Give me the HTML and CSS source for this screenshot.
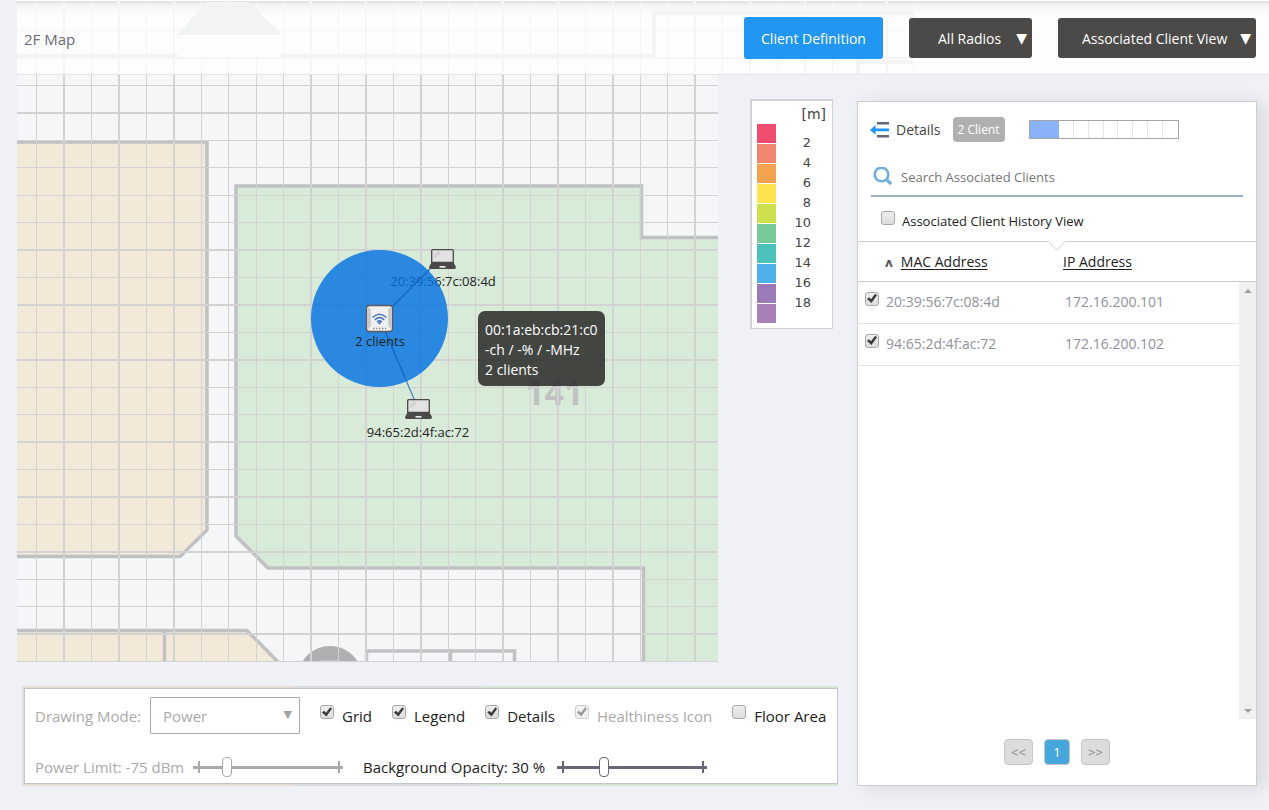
FILE: index.html
```html
<!DOCTYPE html>
<html lang="en">
<head>
<meta charset="utf-8">
<title>2F Map</title>
<link rel="stylesheet" href="styles.css">
</head>
<body>
<header class="topbar">
  <svg class="topbar-art" width="910" height="74" aria-hidden="true">
    <path class="faint-line" d="M19.500 0V74M74.500 0V74M129.500 0V74M184.500 0V74M211.500 0V74M239.500 0V74M266.500 0V74M321.500 0V74M376.500 0V74M431.500 0V74M458.500 0V74M513.500 0V74M568.500 0V74M623.500 0V74M650.500 0V74M705.500 0V74M760.500 0V74M815.500 0V74M842.500 0V74M896.500 0V74M0 30.500H896"/>
    <path class="faint-line faint-line-bold" d="M47 0V74M102 0V74M157 0V74M294 0V74M349 0V74M404 0V74M486 0V74M541 0V74M596 0V74M678 0V74M733 0V74M788 0V74M870 0V74M0 58H896"/>
    <path class="faint-wall" d="M0 56H161M262 56H637V13H895V24M841 74V62H895"/>
    <path fill="#f2f4f3" d="M189 2H232L265 35H160Z"/>
    <path fill="#fdfdfd" d="M161 36H262V57H161Z"/>
  </svg>
  <h1 class="title">2F Map</h1>
  <button class="btn-primary" type="button">Client Definition</button>
  <div class="dropdown">
    <select class="dark-select radios" aria-label="Radios"><option>All Radios</option></select>
    <span class="caret" aria-hidden="true">▼</span>
  </div>
  <div class="dropdown">
    <select class="dark-select view" aria-label="View"><option>Associated Client View</option></select>
    <span class="caret" aria-hidden="true">▼</span>
  </div>
</header>

<main class="workspace">
  <section class="stage">
    <div class="map-row">
      <svg class="map" viewBox="0 0 701 587" role="img" aria-label="Floor map">
        <rect width="701" height="587" fill="#f5f6f8"/>
        <g class="wall">
          <path fill="#f3e9d8" d="M-5 67H190V455L163 481.500H-5Z"/>
          <path fill="#d8ebd8" d="M219 111H624.500V162.500H706V592H626.500V493H251L219 461Z"/>
          <path fill="#f3e9d8" d="M-5 555.500H230L265 591H-5Z"/>
          <path fill="none" d="M147.500 555V590M349.500 590V576H497.500V590M433.500 576V590"/>
        </g>
        <path fill="#aeafb1" d="M285 587C292 576 302 571 313 571S334 576 341 587Z"/>
        <path fill="#c6c6c8" d="M303 587V585H323V587Z"/>
        <text class="room-no" x="508" y="330">141</text>
        <path class="grid" d="M19.500 0V587M74.500 0V587M129.500 0V587M184.500 0V587M211.500 0V587M239.500 0V587M266.500 0V587M321.500 0V587M376.500 0V587M431.500 0V587M458.500 0V587M513.500 0V587M568.500 0V587M623.500 0V587M650.500 0V587M0 10.500H701M0 65.500H701M0 92.500H701M0 120.500H701M0 147.500H701M0 202.500H701M0 257.500H701M0 312.500H701M0 339.500H701M0 394.500H701M0 449.500H701M0 504.500H701M0 531.500H701M0 586.500H701"/>
        <path class="grid grid-bold" d="M47 0V587M102 0V587M157 0V587M294 0V587M349 0V587M404 0V587M486 0V587M541 0V587M596 0V587M678 0V587M0 38H701M0 175H701M0 230H701M0 285H701M0 367H701M0 422H701M0 477H701M0 559H701"/>
        <defs>
          <g id="laptop">
            <path fill="#e2e2e2" stroke="#4b4948" stroke-width="1.300" d="M3.600 .7H23.400Q24.300 .7 24.300 1.600V13.500H2.700V1.600Q2.700 .7 3.600 .7Z"/>
            <path stroke="#b5b5b5" stroke-width=".8" d="M5 6.500L9.500 2.500M5 9L11.500 3.200"/>
            <path fill="#4b4948" d="M2.500 13.500H24.500L27 18Q27 20 25.500 20H1.500Q0 20 0 18Z"/>
            <path fill="#e8e8e8" d="M10.500 17H16.500V18.700H10.500Z"/>
          </g>
        </defs>
        <path class="link" d="M363 244L414 193M363 244L400 331"/>
        <text class="node-label" x="426" y="211">20:39:56:7c:08:4d</text>
        <circle class="coverage" cx="362.500" cy="243.500" r="68.500"/>
        <path class="link link-over" d="M363 244L412 195M363 244L388 303"/>
        <use href="#laptop" x="412" y="174"/>
        <use href="#laptop" x="388" y="324"/>
        <g>
          <rect x="349.500" y="230.500" width="26" height="26" rx="3" fill="#f0f0f1" stroke="#5c5a5a" stroke-width="1.300"/>
          <path fill="#c7c8ca" d="M350.300 232L353.800 234V251L350.300 255ZM374.700 232L371.200 234V251L374.700 255Z"/>
          <path fill="none" stroke="#4f7dbb" stroke-width="1.600" d="M355.500 242.500Q362.500 236 369.500 242.500M357.800 244.800Q362.500 240.500 367.200 244.800M360 247Q362.500 244.800 365 247"/>
          <circle cx="362.500" cy="248" r="1.400" fill="#4f7dbb"/>
          <path stroke="#909090" stroke-width="1.300" stroke-dasharray="1.500 1.500" d="M356 253.500H369"/>
        </g>
        <text class="node-label" x="363" y="271">2 clients</text>
        <text class="node-label" x="401" y="362">94:65:2d:4f:ac:72</text>
        <rect class="tip" x="461" y="236" width="127" height="75" rx="7"/>
        <text class="tip-text" x="468" y="260">00:1a:eb:cb:21:c0</text>
        <text class="tip-text" x="468" y="280">-ch / -% / -MHz</text>
        <text class="tip-text" x="468" y="300">2 clients</text>
      </svg>

      <aside class="legend" aria-label="Distance legend">
        <div class="legend-unit">[m]</div>
        <div class="legend-body">
          <div class="swatches">
            <i class="c1"></i><i class="c2"></i><i class="c3"></i><i class="c4"></i><i class="c5"></i><i class="c6"></i><i class="c7"></i><i class="c8"></i><i class="c9"></i><i class="c10"></i>
          </div>
          <div class="marks">
            <span>2</span><span>4</span><span>6</span><span>8</span><span>10</span><span>12</span><span>14</span><span>16</span><span>18</span>
          </div>
        </div>
      </aside>
    </div>

    <div class="toolbar-edge">
      <form class="toolbar">
        <div class="tool-row">
          <label class="muted drawing" for="mode">Drawing Mode:</label>
          <div class="dropdown mode">
            <select id="mode" class="light-select" disabled><option>Power</option></select>
            <span class="caret small" aria-hidden="true">▼</span>
          </div>
          <label class="tick"><input type="checkbox" checked>Grid</label>
          <label class="tick"><input type="checkbox" checked>Legend</label>
          <label class="tick"><input type="checkbox" checked>Details</label>
          <label class="tick muted"><input type="checkbox" checked disabled>Healthiness Icon</label>
          <label class="tick"><input type="checkbox">Floor Area</label>
        </div>
        <div class="tool-row sliders">
          <label class="muted power" for="power">Power Limit: -75 dBm</label>
          <input id="power" class="slider" type="range" min="0" max="100" value="21" disabled>
          <label class="opacity" for="opacity">Background Opacity: 30 %</label>
          <input id="opacity" class="slider" type="range" min="0" max="100" value="30">
        </div>
      </form>
    </div>
  </section>

  <section class="panel">
    <div class="panel-head">
      <svg width="20" height="16" viewBox="0 0 20 16" aria-hidden="true">
        <path fill="#636777" d="M7 0H19V2.500H7ZM7 13H19V15.500H7Z"/>
        <path fill="#1e96ff" d="M0 7.900L5.500 3V6.600H19V9.200H5.500V12.800Z"/>
      </svg>
      <h2 class="panel-title">Details</h2>
      <span class="badge">2 Client</span>
      <div class="gauge" role="img" aria-label="2 of 10">
        <i class="on"></i><i class="on"></i><i></i><i></i><i></i><i></i><i></i><i></i><i></i><i></i>
      </div>
    </div>
    <div class="search">
      <svg width="20" height="20" viewBox="0 0 20 20" fill="none" aria-hidden="true">
        <circle cx="8.500" cy="7.500" r="6.800" stroke="#74acdc" stroke-width="2.600"/>
        <path stroke="#74acdc" stroke-width="3.400" d="M13.300 12.300L18 17"/>
      </svg>
      <input type="text" placeholder="Search Associated Clients" aria-label="Search Associated Clients">
    </div>
    <label class="tick history"><input type="checkbox">Associated Client History View</label>
    <div class="list">
      <svg class="notch" width="20" height="11" viewBox="0 0 20 11" aria-hidden="true">
        <path fill="#fff" stroke="#d5d5d8" d="M1 0L10 9L19 0"/>
      </svg>
      <table class="clients">
        <thead>
          <tr>
            <th class="mac"><span class="sort">ʌ</span><a href="#">MAC Address</a></th>
            <th class="ip"><a href="#">IP Address</a></th>
          </tr>
        </thead>
        <tbody>
          <tr><td><label class="tick row-tick"><input type="checkbox" checked>20:39:56:7c:08:4d</label></td><td class="ip">172.16.200.101</td></tr>
          <tr><td><label class="tick row-tick"><input type="checkbox" checked>94:65:2d:4f:ac:72</label></td><td class="ip">172.16.200.102</td></tr>
        </tbody>
      </table>
      <div class="scrollbar" aria-hidden="true"><i class="up"></i><i class="down"></i></div>
    </div>
    <nav class="pager" aria-label="Pages">
      <button type="button">&lt;&lt;</button>
      <button type="button" class="current">1</button>
      <button type="button">&gt;&gt;</button>
    </nav>
  </section>
</main>
</body>
</html>
```

FILE: styles.css
```css
* { box-sizing: border-box; }

body {
  margin: 0;
  background: #f0f1f6;
  color: #222;
  font: 14px/20px "Open Sans", "Noto Sans", sans-serif;
}

h1, h2 { margin: 0; font-weight: 400; }
button, select, input { font-family: inherit; margin: 0; }

/* Top bar */
.topbar {
  position: relative;
  display: flex;
  align-items: center;
  gap: 26px;
  height: 75px;
  margin-left: 17px;
  padding: 2px 13px 0 0;
  background: linear-gradient(#fff 0 1px, #e4e4e4 1px 3px, #f2f2f2 4px, #fdfdfd 14px);
  border-bottom: 1px solid #e4e5e8;
}
.topbar-art { position: absolute; left: 0; top: 0; }
.faint-line { stroke: #f5f5f5; }
.faint-line-bold { stroke-width: 2; }
.faint-wall { fill: none; stroke: #f4f4f4; stroke-width: 4; }
.title {
  position: relative;
  flex: 1;
  padding: 2px 0 0 7px;
  font-size: 15px;
  line-height: 20px;
  color: #686b78;
}
.btn-primary {
  position: relative;
  width: 139px;
  height: 42px;
  border: 0;
  border-radius: 3px;
  background: #2196f3;
  color: #fff;
  font-size: 14px;
}
.dropdown { position: relative; }
.dark-select {
  display: block;
  height: 40px;
  border: 0;
  border-radius: 3px;
  background: #4b4a48;
  color: #fff;
  font-size: 14px;
  appearance: none;
}
.radios { width: 123px; padding: 0 0 0 29px; }
.view { width: 198px; padding: 0 0 0 24px; }
.caret {
  position: absolute;
  right: 5px;
  top: 10px;
  color: #fff;
  font: 14px/20px "DejaVu Sans", sans-serif;
  pointer-events: none;
}

/* Map and legend */
.workspace {
  display: flex;
  gap: 19px;
  padding: 0 12px 24px 17px;
}
.stage { flex: 1; min-width: 0; }
.map-row {
  display: flex;
  align-items: flex-start;
  gap: 32px;
  padding-right: 5px;
}
.map { display: block; flex: 1; min-width: 0; }
.wall { stroke: #c0c1c3; stroke-width: 3.5; }
.grid { stroke: #d2d2d3; fill: none; }
.grid-bold { stroke-width: 2; }
.link { stroke: #4a86bd; fill: none; stroke-width: 1.3; }
.link-over { stroke: #1a69bd; }
.coverage { fill: #0572e2; fill-opacity: .82; }
.node-label { font-size: 13px; text-anchor: middle; fill: #222; }
.room-no { font: 700 34px "Open Sans", sans-serif; fill: #bfc1c3; }
.tip { fill: #2d2d2b; fill-opacity: .88; }
.tip-text { font-size: 14px; fill: #fff; }

.legend {
  width: 83px;
  margin-top: 24px;
  padding: 4px 6px 4px 5px;
  border: 2px solid #d2d2d4;
  border-width: 2px 1px 1px 2px;
  background: #fff;
  font-family: "DejaVu Sans", sans-serif;
  color: #444;
}
.legend-unit { font-size: 14px; line-height: 18px; text-align: right; }
.legend-body { display: flex; justify-content: space-between; padding-top: 1px; }
.swatches i { display: block; width: 19px; height: 19px; margin-bottom: 1px; }
.marks { display: grid; grid-auto-rows: 20px; padding: 9px 15px 0 0; font-size: 13px; text-align: right; }
.c1 { background: #ee4d70; }
.c2 { background: #ee876d; }
.c3 { background: #f3a34f; }
.c4 { background: #fee34c; }
.c5 { background: #cde04b; }
.c6 { background: #78ca9a; }
.c7 { background: #4cc1b9; }
.c8 { background: #4db1e8; }
.c9 { background: #9a7bb8; }
.c10 { background: #a780b8; }

/* Drawing options */
.toolbar-edge {
  margin: 24px 0 0 5px;
  padding: 2px 0 2px 2px;
  background: linear-gradient(90deg, #e5dfd5 0 270px, #dadbdd 270px 460px, #d6e4d6 460px);
}
.toolbar {
  padding: 8px 10px 4px;
  border: 1px solid #c3c5c9;
  background: #fff;
  font-size: 15px;
}
.tool-row { display: flex; align-items: center; gap: 20px; }
.tool-row > label { white-space: nowrap; }
.muted { color: #a9a9a9; }
.drawing { width: 111px; }
.mode { margin-left: -16px; }
.light-select {
  display: block;
  width: 150px;
  height: 37px;
  padding: 0 0 0 12px;
  border: 1px solid #a9a9a9;
  border-radius: 1px;
  background: #fff;
  color: #a9a9a9;
  font-size: 15px;
  opacity: 1;
  appearance: none;
}
.small { right: 8px; top: 8px; font-size: 11px; color: #a0a0a0; }
.tick { display: flex; align-items: center; gap: 7px; }
.tool-row .tick { gap: 8px; }
.tick input {
  position: relative;
  flex: none;
  width: 14px;
  height: 14px;
  margin-bottom: 7px;
  border: 1px solid #a8a8a8;
  border-radius: 3px;
  background: linear-gradient(#eee, #dcdcdc);
  appearance: none;
}
.tick input:checked::before {
  content: "";
  position: absolute;
  inset: 1px;
  background: #3c3c3c;
  clip-path: polygon(0 55%, 20% 38%, 40% 58%, 82% 2%, 100% 18%, 44% 96%);
}
.tick input:disabled { border-color: #cfcfcf; background: #f1f1f1; }
.tick input:disabled::before { background: #999; }
.sliders { gap: 0; margin-top: 21px; height: 24px; }
.slider {
  --ink: #a9a9a9;
  width: 150px;
  height: 20px;
  margin-left: 5px;
  background:
    linear-gradient(var(--ink), var(--ink)) 5px 4px / 2px 12px no-repeat,
    linear-gradient(var(--ink), var(--ink)) 145px 4px / 2px 12px no-repeat,
    linear-gradient(var(--ink), var(--ink)) 0 9px / 100% 3px no-repeat;
  appearance: none;
}
.slider:enabled { --ink: #636777; }
.slider::-webkit-slider-thumb {
  width: 10px;
  height: 20px;
  border: 1px solid var(--ink);
  border-radius: 4px;
  background: #fff;
  appearance: none;
}
.power { width: 153px; }
.opacity { width: 189px; margin-left: 20px; }

/* Client panel */
.panel {
  display: flex;
  flex-direction: column;
  width: 400px;
  margin-top: 26px;
  border: 1px solid #cdced1;
  background: #fff;
  box-shadow: 8px 2px 18px rgba(0, 0, 0, .1);
}
.panel-head { display: flex; align-items: center; padding: 15px 12px 0; }
.panel-title { margin-left: 6px; font-size: 14px; line-height: 20px; color: #444; }
.badge {
  margin-left: 12px;
  padding: 0 5px;
  border-radius: 4px;
  background: #b0b0b0;
  color: #fff;
  font-size: 12px;
  line-height: 25px;
}
.gauge {
  display: grid;
  grid-template-columns: repeat(10, 1fr);
  width: 150px;
  height: 19px;
  margin-left: 24px;
  border: 1px solid #a5a5a5;
}
.gauge i { border-right: 1px solid #e6e6e6; }
.gauge i:last-child { border-right: 0; }
.gauge .on { border-color: #8ab2f8; background: #8ab2f8; }
.search {
  display: flex;
  align-items: center;
  gap: 8px;
  margin: 17px 13px 0;
  padding: 0 0 0 2px;
  height: 38px;
  border-bottom: 2px solid #9cb4c6;
}
.search input {
  flex: 1;
  min-width: 0;
  padding: 0;
  border: 0;
  outline: 0;
  background: none;
  font-size: 13px;
  line-height: 20px;
}
.search input::placeholder { color: #777; opacity: 1; }
.history { margin: 12px 0 7px 23px; font-size: 13px; line-height: 25px; }
.list { position: relative; flex: 1; border-top: 1px solid #cdced1; }
.notch { position: absolute; left: 189px; top: -1px; }
.clients { width: 100%; border-collapse: collapse; table-layout: fixed; }
.clients th {
  height: 39px;
  padding: 2px 0 0;
  border-bottom: 1px solid #c9cacd;
  font-weight: 400;
  text-align: left;
}
.clients th a { color: #222; text-underline-offset: 2px; }
.clients .mac { width: 205px; padding-left: 27px; }
.sort { margin-right: 8px; font: 700 12px "DejaVu Sans", sans-serif; color: #555; }
.clients td { height: 42px; padding: 0; border-bottom: 1px solid #e1e4e9; color: #8f919c; }
.clients td.ip { padding-left: 2px; }
.row-tick { padding-left: 7px; }
.scrollbar {
  position: absolute;
  top: 40px;
  right: 0;
  bottom: 0;
  width: 17px;
  display: flex;
  flex-direction: column;
  justify-content: space-between;
  align-items: center;
  padding: 7px 0 6px;
  background: #f0f0f0;
}
.scrollbar i { border: 4px solid transparent; }
.scrollbar .up { border-top: 0; border-bottom-color: #a0a0a0; }
.scrollbar .down { border-bottom: 0; border-top-color: #a0a0a0; }
.pager { display: flex; justify-content: center; gap: 11px; padding: 20px 0; }
.pager button {
  width: 29px;
  height: 26px;
  padding: 0;
  border: 1px solid #c6c6c6;
  border-radius: 4px;
  background: #dcdcdc;
  color: #888;
  font-size: 13px;
}
.pager .current { width: 26px; background: #45a7dc; color: #fff; }
```
